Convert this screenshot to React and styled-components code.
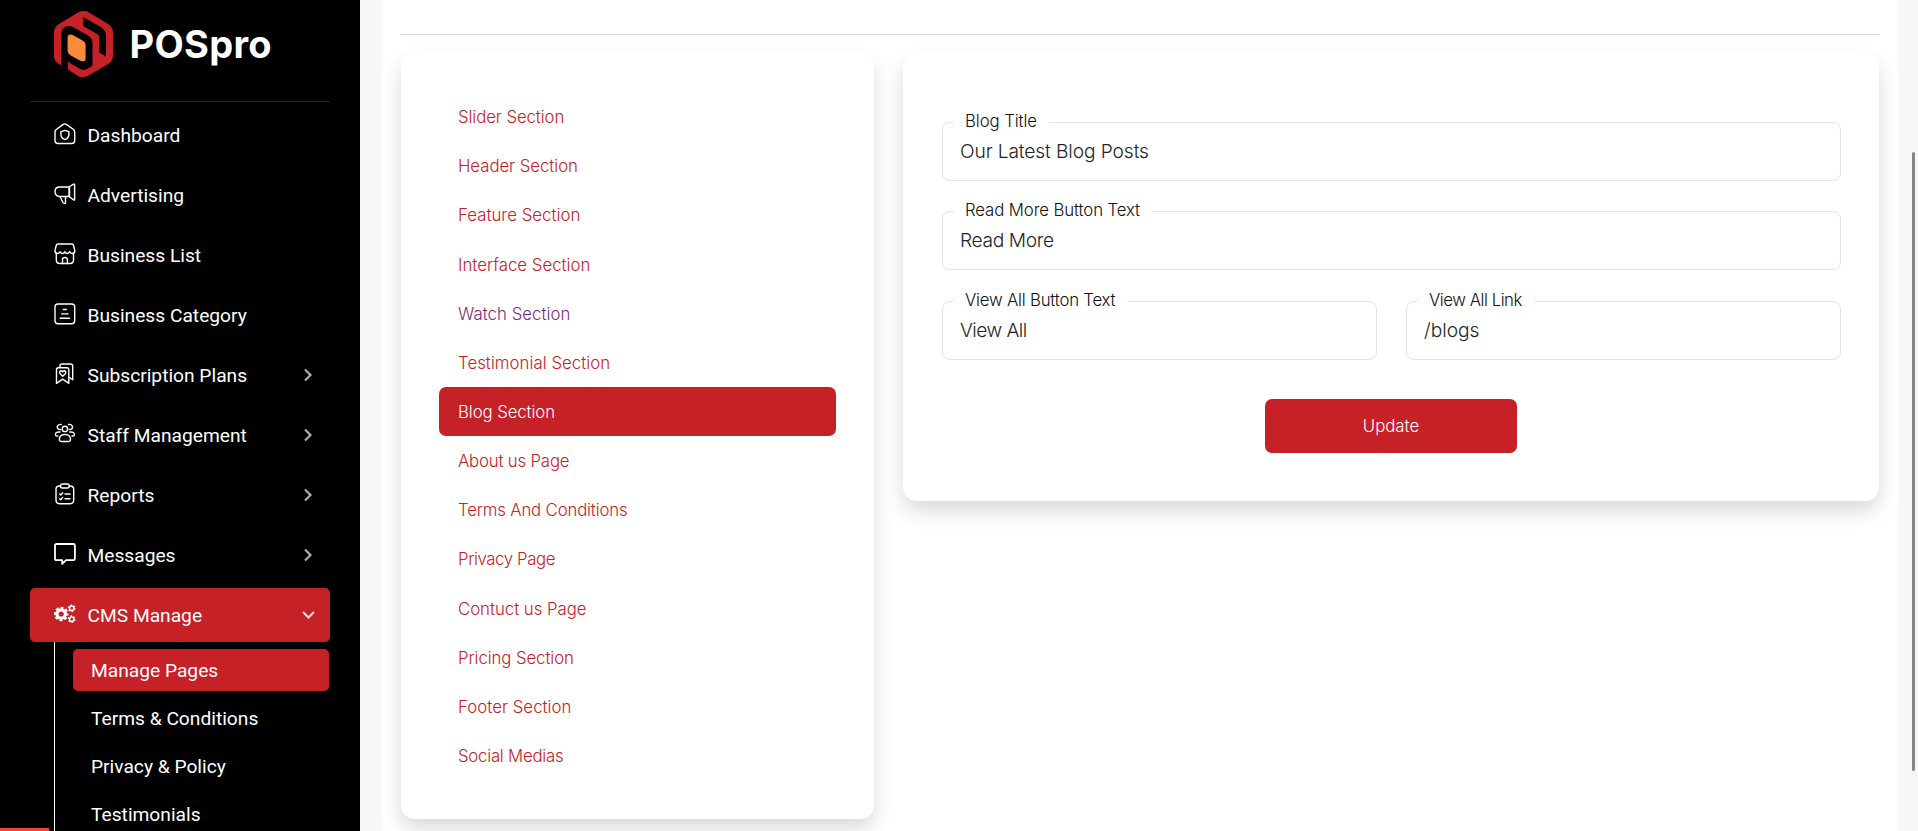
import React from "react";
import styled, { createGlobalStyle } from "styled-components";

const RED = "#c52127";

const GlobalStyle = createGlobalStyle`
  * { box-sizing: border-box; }
  body { margin: 0; background: #f7f7f7; overflow: hidden; }
`;

const Page = styled.div`
  display: flex;
  width: 1918px;
  height: 831px;
  overflow: hidden;
  position: relative;
  background: #f7f7f7;
  font-family: Inter, "Liberation Sans", sans-serif;
`;

const Sidebar = styled.aside`
  width: 360px;
  height: 831px;
  flex: none;
  overflow: hidden;
  background: #000;
  padding: 0 30px;
  color: #fff;
  font-family: Roboto, "Liberation Sans", sans-serif;
`;

const Brand = styled.div`
  display: flex;
  align-items: flex-start;
  height: 102px;
  padding: 11px 0 0 24px;
  border-bottom: 1px solid #222;
  svg { flex: none; }
`;

const BrandName = styled.span`
  margin-left: 16.5px;
  margin-top: 10px;
  font: 700 38px/46px Inter, "Liberation Sans", sans-serif;
  letter-spacing: 0.3px;
`;

const Nav = styled.nav`
  display: flex;
  flex-direction: column;
  gap: 6px;
  padding-top: 6px;
`;

const NavItem = styled.a`
  display: flex;
  align-items: center;
  height: 54px;
  flex: none;
  padding: 0 15px 0 24px;
  border-radius: 5px;
  background: ${(p) => (p.$active ? RED : "transparent")};
  font-size: 19.2px;
  line-height: 28px;
  color: #fff;
  > svg:first-child { margin-top: -2px; }
`;

const NavLabel = styled.span`
  flex: 1;
  margin-left: 11.5px;
  padding-top: 2px;
  white-space: nowrap;
`;

const SubMenu = styled.div`
  display: flex;
  flex-direction: column;
  gap: 6px;
  margin: 0 1px 0 24px;
  padding: 7px 0 0 18px;
  border-left: 1px solid #fff;
`;

const SubItem = styled.a`
  height: 42px;
  flex: none;
  padding-left: 18px;
  border-radius: 5px;
  background: ${(p) => (p.$active ? RED : "transparent")};
  font-size: 19.2px;
  line-height: 44px;
  white-space: nowrap;
`;

const LoadBar = styled.div`
  position: absolute;
  left: 0;
  bottom: 0;
  width: 49px;
  height: 3px;
  background: #f44336;
`;

const Panel = styled.main`
  width: 1516px;
  height: 831px;
  margin-left: 22px;
  padding: 34px 19px 0;
  background: #fff;
`;

const Rule = styled.div`
  height: 1px;
  background: #d6d6d6;
`;

const Columns = styled.div`
  display: flex;
  align-items: flex-start;
  gap: 29px;
  margin-top: 18px;
`;

const Card = styled.section`
  background: #fff;
  border-radius: 14px;
  box-shadow: 0 10px 20px rgba(0, 0, 0, 0.15);
`;

const LinkCard = styled(Card)`
  width: 473px;
  height: 766px;
  padding: 39.2px 38px;
  display: flex;
  flex-direction: column;
`;

const SectionLink = styled.a`
  height: 49.15px;
  flex: none;
  padding-left: 19px;
  border-radius: 7px;
  font-size: 16.8px;
  font-weight: 350;
  line-height: 50px;
  letter-spacing: ${(p) => -0.09 + (p.$track || 0)}px;
  white-space: nowrap;
  color: ${(p) => (p.$active ? "#fff" : p.$visited ? "#7d2b78" : RED)};
  background: ${(p) => (p.$active ? RED : "transparent")};
`;

const FormCard = styled(Card)`
  width: 976px;
  height: 448px;
  padding: 68.7px 38px 0 39px;
`;

const FieldGrid = styled.div`
  display: grid;
  grid-template-columns: 435px 435px;
  column-gap: 29px;
  row-gap: 30.5px;
`;

const Field = styled.div`
  position: relative;
  grid-column: ${(p) => (p.$wide ? "1 / 3" : "auto")};
  height: 59.3px;
  padding: 0 17px;
  border: 1px solid #e3e3e3;
  border-radius: 8px;
  margin-bottom: -0.3px;
`;

const FieldLabel = styled.label`
  position: absolute;
  left: 11px;
  top: -14.2px;
  padding: 0 12px 0 11px;
  background: #fff;
  font-size: 16.8px;
  font-weight: 350;
  line-height: 24px;
  letter-spacing: ${(p) => -0.09 + (p.$track || 0)}px;
  white-space: nowrap;
  color: #111;
`;

const FieldValue = styled.div`
  font-size: 19.2px;
  font-weight: 350;
  line-height: 57.6px;
  letter-spacing: ${(p) => -0.11 + (p.$track || 0)}px;
  color: #212529;
`;

const UpdateButton = styled.button`
  display: block;
  width: 252px;
  height: 54px;
  margin: 39.3px 0 0 323px;
  padding: 0;
  border: 0;
  border-radius: 7px;
  background: ${RED};
  color: #fff;
  font: 350 16.8px/54px Inter, "Liberation Sans", sans-serif;
  letter-spacing: 0;
`;

const ScrollThumb = styled.div`
  position: absolute;
  left: 1912px;
  top: 152px;
  width: 3px;
  height: 619px;
  border-radius: 2px;
  background: #858585;
`;

const Logo = () => (
  <svg width="59" height="66" viewBox="0 0 59 66">
    <path d="M24 1.4Q29.500 -1.300 35 1.400L54 13Q59 16 59 22V44Q59 50 54.500 52.800L34.500 64.600Q29.500 67.400 24.500 64.600L4 52.500Q0 50 0 45V22Q0 16 5 13Z" fill={RED} />
    <path d="M7 66V24Q7 15 15 15Q17.500 15 20 16.400L34 24.600Q38.500 27.400 38.500 32V53Q38.500 56 36 57.400L32.500 59.200Q29.500 60 27 58.500L14 51V66Z" fill="#000" />
    <path d="M13.800 51L25 57.800Q29.500 60.200 34 57.600L38 55V60L30 66H26L17 60.500Q13.800 58.500 13.800 55Z" fill={RED} />
    <path d="M29 6L46 15.500Q52 19 52 25V45.500L45 41.500V26Q45 24 43 23L29 15Z" fill="#000" />
    <path d="M13.600 26.500Q13.600 23.500 16.500 23.500Q18 23.500 20 24.700L28.500 29.500Q31.600 31.200 31.600 34.500V47.500Q31.600 50.700 28 50.300Q26 49.800 24 48.500L16 43.900Q13.600 42.300 13.600 39.500Z" fill="#f98b3c" />
  </svg>
);

const icons = {
  home: (
    <>
      <path d="M1 9Q1 7.500 2.300 6.500L9.200 1.400Q10.800 .4 12.400 1.400L19.500 6.500Q20.700 7.500 20.700 9V17.500Q20.700 20.500 17.700 20.500H4Q1 20.500 1 17.500Z" />
      <path d="M10.900 7.300L14.900 8.700V11.400Q14.900 14.800 10.900 16.600Q6.900 14.800 6.900 11.400V8.700Z" />
    </>
  ),
  horn: (
    <>
      <path d="M15 4H5Q1 4.500 1 8.500T5 13.500H15M15 4L19.600 1.100Q20.600 .8 20.600 2V16.300Q20.600 17.500 19.600 16.900L15 13.500ZM15.500 4V13.500" />
      <path d="M6 13.700L9 19.500Q9.700 20.700 11.500 20.300V14" />
    </>
  ),
  shop: (
    <>
      <path d="M2.300 10V17Q2.300 20.500 5.800 20.500H16Q19.500 20.500 19.500 17V10" />
      <path d="M4 1H17.800Q19.200 1 19.600 2.500L20.800 7.500Q21 10 18.800 10.500Q16.500 10.500 15.700 8.700Q14.700 10.500 13.300 10.500Q11.600 10.500 10.900 8.700Q10.200 10.500 8.500 10.500Q7 10.500 6.100 8.700Q5.300 10.500 3 10.500Q.8 10 1 7.500L2.200 2.500Q2.600 1 4 1Z" />
      <path d="M8.500 20.500V16.500Q8.500 14.500 10.900 14.500T13.400 16.500V20.500" />
    </>
  ),
  list: (
    <>
      <rect x="1" y="1" width="19.700" height="19.700" rx="3" />
      <path d="M9.300 6.500H12.300M7.700 10.900H14M6.200 15.300H15.600" />
    </>
  ),
  plans: (
    <>
      <path d="M2.500 20.300V6.500Q2.500 4.700 4.300 4.700H13Q14.800 4.700 14.800 6.500V20.300L8.700 16.200Z" />
      <path d="M6 4.500V3Q6 1 8 1H16.700Q18.700 1 18.700 3V16.800L15.500 14.500" />
      <path d="M8.700 13.300L5.900 10.500Q5 8.200 7 7.800Q8.200 7.800 8.700 8.900Q9.200 7.800 10.500 7.800Q12.400 8.200 11.500 10.500Z" />
    </>
  ),
  staff: (
    <g transform="translate(0 -1)">
      <circle cx="10.900" cy="6.900" r="2.700" />
      <path d="M5.500 18.500Q4.700 12.500 10.900 12.500T16.400 18.500Q16 19.500 14.500 19.500H7.300Q6 19.500 5.500 18.500Z" />
      <path d="M6.500 7.500Q3 7.500 3.300 4.500Q4 2 7.200 2.500M15.300 7.500Q18.800 7.500 18.500 4.500Q17.800 2 14.600 2.500M6 10Q1 9.500 1.500 13.200Q2 14.300 3.800 14M15.800 10Q20.800 9.500 20.300 13.200Q19.800 14.300 18 14" />
    </g>
  ),
  report: (
    <>
      <path d="M6.500 3H5.500Q2 3 2 6.500V17Q2 20.700 5.500 20.700H16.200Q19.700 20.700 19.700 17V6.500Q19.700 3 16.200 3H15.200" />
      <rect x="6.500" y="1" width="8.700" height="4" rx="1.800" />
      <path d="M5.700 11L6.800 12L8.700 9.700M11 11H16M5.700 15.700L6.800 16.700L8.700 14.400M11 15.700H16" />
    </>
  ),
  message: <path strokeWidth="1.800" d="M2.500 1H19.300Q20.900 1 20.900 2.500V15.700Q20.900 17.200 19.300 17.200H12L8.200 20.800V17.200H2.500Q1 17.200 1 15.700V2.500Q1 1 2.500 1Z" />,
  gears: (
    <g strokeLinecap="butt">
      <circle cx="7.200" cy="11" r="4.200" strokeWidth="3.200" />
      <circle cx="7.200" cy="11" r="6.200" strokeWidth="2.200" strokeDasharray="2.900 1.970" strokeDashoffset="1.450" />
      <circle cx="17.700" cy="5.300" r="2.200" strokeWidth="1.500" />
      <circle cx="17.700" cy="5.300" r="3.200" strokeWidth="1.300" strokeDasharray="1.680 1.670" />
      <circle cx="17.700" cy="16.200" r="2.200" strokeWidth="1.500" />
      <circle cx="17.700" cy="16.200" r="3.200" strokeWidth="1.300" strokeDasharray="1.680 1.670" />
    </g>
  ),
};

const NavIcon = ({ name }) => (
  <svg width="22" height="22" viewBox="0 0 22 22" fill="none" stroke="#fff" strokeWidth="1.400" strokeLinejoin="round" strokeLinecap="round">
    {icons[name]}
  </svg>
);

const Chevron = ({ open }) => (
  <svg width="14" height="14" viewBox="0 0 14 14" fill="none" stroke={open ? "#f3d3d4" : "#aaa"} strokeWidth="2.200">
    <path d={open ? "M2 4L7.500 9.500L13 4" : "M4 1.500L9.500 7L4 12.500"} />
  </svg>
);

const navItems = [
  ["Dashboard", "home"],
  ["Advertising", "horn"],
  ["Business List", "shop"],
  ["Business Category", "list"],
  ["Subscription Plans", "plans", true],
  ["Staff Management", "staff", true],
  ["Reports", "report", true],
  ["Messages", "message", true],
  ["CMS Manage", "gears", true, true],
];

const subItems = ["Manage Pages", "Terms & Conditions", "Privacy & Policy", "Testimonials"];

const sections = [
  ["Slider Section", 0],
  ["Header Section", 0.04],
  ["Feature Section", 0.12],
  ["Interface Section", 0.1],
  ["Watch Section", 0.13],
  ["Testimonial Section", 0.13],
  ["Blog Section", 0],
  ["About us Page", -0.1],
  ["Terms And Conditions", -0.08],
  ["Privacy Page", -0.3],
  ["Contuct us Page", 0.06],
  ["Pricing Section", 0],
  ["Footer Section", 0.13],
  ["Social Medias", -0.15],
];

const fields = [
  { label: "Blog Title", value: "Our Latest Blog Posts", wide: true },
  { label: "Read More Button Text", labelTrack: -0.02, value: "Read More", valueTrack: -0.27, wide: true },
  { label: "View All Button Text", labelTrack: -0.12, value: "View All", valueTrack: -0.45 },
  { label: "View All Link", labelTrack: -0.38, value: "/blogs", valueTrack: 0.1 },
];

export default function App() {
  return (
    <>
      <GlobalStyle />
      <Page>
        <Sidebar>
          <Brand>
            <Logo />
            <BrandName>POSpro</BrandName>
          </Brand>
          <Nav>
            {navItems.map(([label, icon, more, active]) => (
              <NavItem key={label} $active={active}>
                <NavIcon name={icon} />
                <NavLabel>{label}</NavLabel>
                {more && <Chevron open={active} />}
              </NavItem>
            ))}
          </Nav>
          <SubMenu>
            {subItems.map((label, i) => (
              <SubItem key={label} $active={i === 0}>{label}</SubItem>
            ))}
          </SubMenu>
        </Sidebar>
        <Panel>
          <Rule />
          <Columns>
            <LinkCard>
              {sections.map(([label, track]) => (
                <SectionLink
                  key={label}
                  $track={track}
                  $active={label === "Blog Section"}
                  $visited={label === "Watch Section"}
                >
                  {label}
                </SectionLink>
              ))}
            </LinkCard>
            <FormCard>
              <FieldGrid>
                {fields.map((f) => (
                  <Field key={f.label} $wide={f.wide}>
                    <FieldLabel $track={f.labelTrack}>{f.label}</FieldLabel>
                    <FieldValue $track={f.valueTrack}>{f.value}</FieldValue>
                  </Field>
                ))}
              </FieldGrid>
              <UpdateButton>Update</UpdateButton>
            </FormCard>
          </Columns>
        </Panel>
        <ScrollThumb />
        <LoadBar />
      </Page>
    </>
  );
}
